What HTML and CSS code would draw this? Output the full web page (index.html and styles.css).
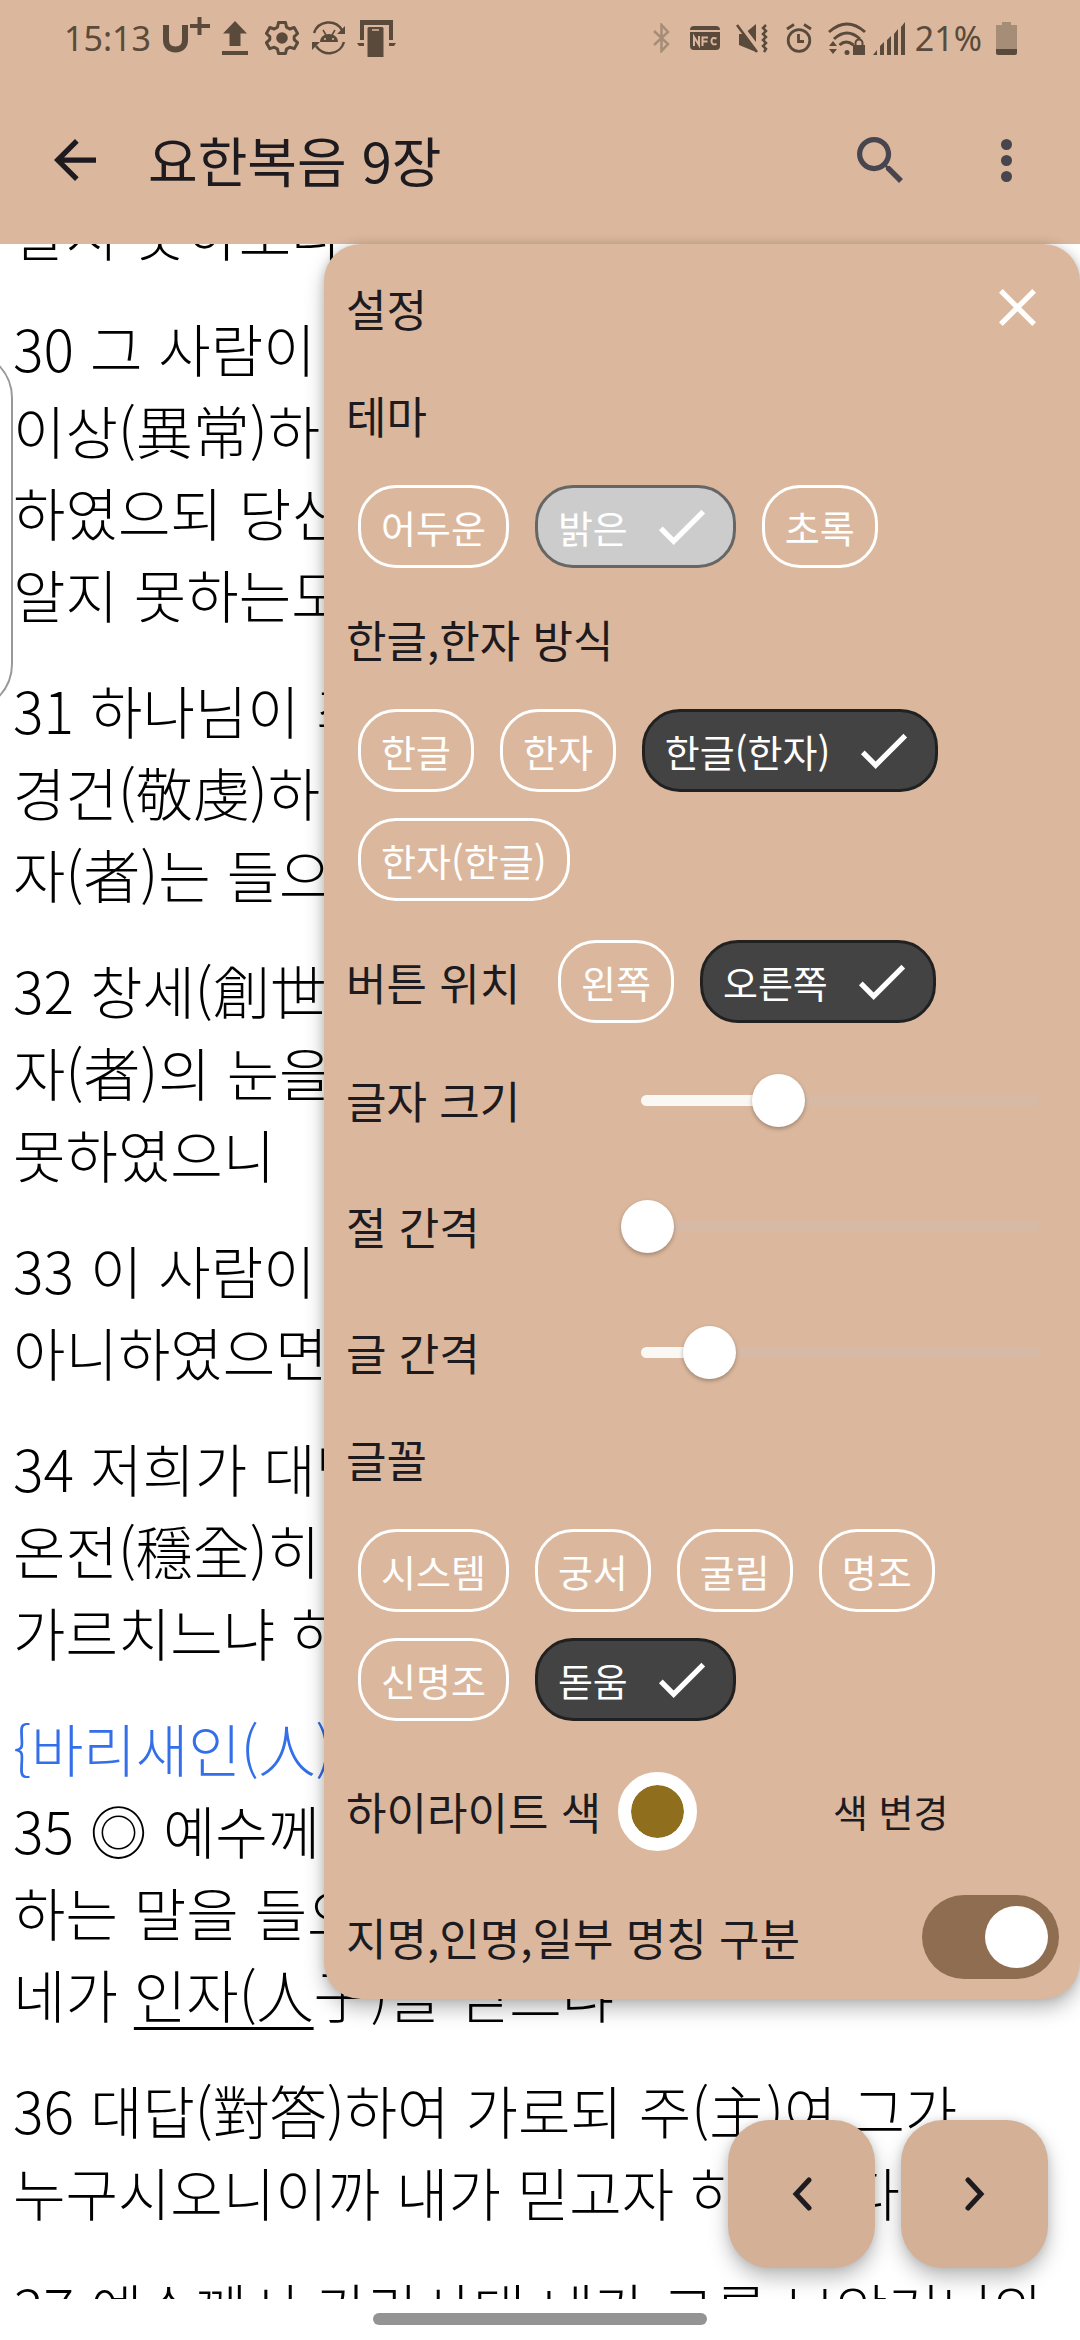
FILE: index.html
```html
<!DOCTYPE html>
<html lang="ko">
<head>
<meta charset="utf-8">
<meta name="viewport" content="width=device-width, initial-scale=1">
<title>요한복음 9장</title>
<link rel="stylesheet" href="styles.css">
</head>
<body>
<header class="top">
  <div class="status">
    <div class="status-left">
      <span class="clock">15:13</span>
      <svg class="ic-uplus" viewBox="0 0 48 38" width="48" height="38"><path d="M4 8v15c0 6 3.500 9.500 9.500 9.500S23 29 23 23V8" fill="none" stroke="currentColor" stroke-width="6"/><path d="M37.500 0v18M28 9h20" stroke="currentColor" stroke-width="4"/></svg>
      <svg class="ic-upload" viewBox="0 0 26 34" width="26" height="34"><path d="M13 0l12 12.500h-6.500V25h-11V12.500H1zM0 30h26v4H0z" fill="currentColor"/></svg>
      <svg class="ic-gear" viewBox="0 0 34 34" width="34" height="34"><circle cx="17" cy="17" r="5.800" fill="currentColor"/><path d="M13.500 1.500h7l1 4.600 3.200 1.900 4.500-1.500 3.400 6-3.400 3.100v3l3.400 3.100-3.400 6-4.500-1.500-3.200 1.900-1 4.400h-7l-1-4.400-3.200-1.900-4.500 1.500-3.400-6 3.400-3.100v-3l-3.400-3.100 3.400-6L9.300 8l3.200-1.900z" fill="none" stroke="currentColor" stroke-width="3" stroke-linejoin="round"/></svg>
      <svg class="ic-sync" viewBox="0 0 34 34" width="34" height="34"><path d="M2 12a15.500 15.500 0 0 1 28-3M32 21a15.500 15.500 0 0 1-28 4" fill="none" stroke="currentColor" stroke-width="2.500"/><path d="M33 5v8h-8zM0 29v-8h8z" fill="currentColor"/><path d="M8 21c0-5 4-8 9-8s9 3 9 8z" fill="currentColor"/><path d="M11 9l3 5M23 9l-3 5" stroke="currentColor" stroke-width="1.500"/><circle cx="13" cy="18" r="1" fill="#dbb89d"/><circle cx="21" cy="18" r="1" fill="#dbb89d"/></svg>
      <svg class="ic-dock" viewBox="0 0 39 37" width="39" height="37"><path d="M3 0h33v20h-4V5H7v15H3zM0 23h7v3H2zM32 23h7l-2 3h-5zM12 7h13q1.500 0 1.500 1.500V37h-16V8.500Q10.500 7 12 7z" fill="currentColor"/><path d="M15 10h7" stroke="#dbb89d" stroke-width="1.500"/></svg>
    </div>
    <div class="status-right">
      <svg class="ic-bt" viewBox="0 0 18 30" width="18" height="30"><path d="M2 8l14 13-6.500 7V2L16 9 2 22" fill="none" stroke="currentColor" stroke-width="2.500"/></svg>
      <svg class="ic-nfc" viewBox="0 0 30 24" width="30" height="24"><path d="M0 4Q0 0 4 0h22q4 0 4 4zM0 6h30v14q0 4-4 4H4q-4 0-4-4z" fill="currentColor"/><path d="M4 20v-9l5 8v-9M12.500 20v-8.500h5.500M12.500 15.500h5M26.500 12.500q-5-2-5 2.500t5 3" fill="none" stroke="#dbb89d" stroke-width="2"/></svg>
      <svg class="ic-mute" viewBox="0 0 32 29" width="32" height="29"><path d="M20 0v28L3 21V10h5z" fill="currentColor"/><path d="M3 0l20 26" stroke="#dbb89d" stroke-width="5"/><path d="M1 1l20 27" stroke="currentColor" stroke-width="2.500"/><path d="M30 1l-3 3 3 3-3 3 3 3-3 3 3 3-3 3 3 3-2 3" fill="none" stroke="currentColor" stroke-width="2.500"/></svg>
      <svg class="ic-alarm" viewBox="0 0 26 30" width="26" height="30"><circle cx="13" cy="17.500" r="10.800" fill="none" stroke="currentColor" stroke-width="2.800"/><path d="M12.500 11v7.500h5.500M1 6l7-4.500M25 6l-7-4.500" fill="none" stroke="currentColor" stroke-width="2.800"/></svg>
      <svg class="ic-wifi" viewBox="0 0 38 33" width="38" height="33"><path d="M1 10q18-16 36 0M6 17q13-12 26 0M11.500 23q6.500-6 14 0" fill="none" stroke="currentColor" stroke-width="3"/><circle cx="19" cy="30.500" r="2.500" fill="currentColor"/><path d="M1 24l4-5 4 5zM1 27l4 5 4-5zM25 23h12v10H25z" fill="currentColor"/><path d="M27.500 24v-3a3.500 3.500 0 0 1 7 0v3" fill="none" stroke="currentColor" stroke-width="2"/></svg>
      <svg class="ic-signal" viewBox="0 0 33 33" width="33" height="33"><path d="M0 33l4-5v5zM7 33v-9l4-4v13zM14 33V18l4-4v19zM21 33V12l4-5v26zM28 33V5l4-5v33z" fill="currentColor"/></svg>
      <span class="percent">21%</span>
      <svg class="ic-battery" viewBox="0 0 21 33" width="21" height="33"><path d="M6 0h9v3h6v24H0V3h6z" fill="#a68d77"/><path d="M0 27h21v4q0 2-2 2H2q-2 0-2-2z" fill="currentColor"/></svg>
    </div>
  </div>
  <div class="appbar">
    <button class="icon-btn" aria-label="뒤로"><svg viewBox="4 4 16 16" width="42" height="42"><path d="M20 11H7.830l5.590-5.590L12 4l-8 8 8 8 1.410-1.410L7.830 13H20z" fill="#1d1b20"/></svg></button>
    <h1>요한복음 9장</h1>
    <button class="icon-btn search" aria-label="검색"><svg viewBox="3 3 17.500 17.500" width="46" height="46"><path d="M15.500 14h-.79l-.28-.27C15.410 12.590 16 11.110 16 9.500 16 5.910 13.090 3 9.500 3S3 5.910 3 9.500 5.910 16 9.500 16c1.610 0 3.090-.59 4.230-1.570l.27.28v.79l5 4.990L20.490 19zm-6 0C7.010 14 5 11.990 5 9.500S7.010 5 9.500 5 14 7.010 14 9.500 11.990 14 9.500 14z" fill="#49454f"/></svg></button>
    <button class="icon-btn" aria-label="더보기"><svg viewBox="0 0 11 43" width="11" height="43"><g fill="#49454f"><circle cx="5.500" cy="5.500" r="5.500"/><circle cx="5.500" cy="21.500" r="5.500"/><circle cx="5.500" cy="37.500" r="5.500"/></g></svg></button>
  </div>
</header>

<main class="reader">
  <div class="verses">
    <p>알지 못하노라</p>
    <p>30 그 사람이<br>이상(異常)하<br>하였으되 당신<br>알지 못하는도</p>
    <p>31 하나님이 죄<br>경건(敬虔)하<br>자(者)는 들으</p>
    <p>32 창세(創世<br>자(者)의 눈을<br>못하였으니</p>
    <p>33 이 사람이<br>아니하였으면</p>
    <p>34 저희가 대답<br>온전(穩全)히<br>가르치느냐 하</p>
    <h2>{바리새인(人)</h2>
    <p>35 ◎ 예수께서<br>하는 말을 들으<br>네가 <u>인자(人</u>子)를 믿느냐</p>
    <p>36 대답(對答)하여 가로되 주(主)여 그가<br>누구시오니이까 내가 믿고자 하나이다</p>
    <p>37 예수께서 가라사대 네가 그를 보았거니와</p>
  </div>
</main>

<div class="edge-handle"></div>

<form class="settings">
  <div class="settings-head">
    <h2>설정</h2>
    <button type="button" class="icon-btn" aria-label="닫기"><svg viewBox="5 5 14 14" width="37" height="37"><path d="M19 6.410L17.590 5 12 10.590 6.410 5 5 6.410 10.590 12 5 17.590 6.410 19 12 13.410 17.590 19 19 17.590 13.410 12z" fill="#fff"/></svg></button>
  </div>

  <h3>테마</h3>
  <div class="chips muted">
    <label class="chip"><input type="radio" name="theme">어두운</label>
    <label class="chip"><input type="radio" name="theme" checked>밝은<svg viewBox="0 0 24 24"><path d="M9 16.170L4.830 12l-1.420 1.410L9 19 21 7l-1.410-1.410z"/></svg></label>
    <label class="chip"><input type="radio" name="theme">초록</label>
  </div>

  <h3>한글,한자 방식</h3>
  <div class="chips">
    <label class="chip"><input type="radio" name="script">한글</label>
    <label class="chip"><input type="radio" name="script">한자</label>
    <label class="chip"><input type="radio" name="script" checked>한글(한자)<svg viewBox="0 0 24 24"><path d="M9 16.170L4.830 12l-1.420 1.410L9 19 21 7l-1.410-1.410z"/></svg></label>
    <label class="chip"><input type="radio" name="script">한자(한글)</label>
  </div>

  <div class="row side-row">
    <span class="row-label">버튼 위치</span>
    <div class="chips">
      <label class="chip"><input type="radio" name="side">왼쪽</label>
      <label class="chip"><input type="radio" name="side" checked>오른쪽<svg viewBox="0 0 24 24"><path d="M9 16.170L4.830 12l-1.420 1.410L9 19 21 7l-1.410-1.410z"/></svg></label>
    </div>
  </div>

  <div class="row slider-row">
    <label class="row-label" for="size">글자 크기</label>
    <div class="slider" style="--value: 34%"><input id="size" type="range" min="0" max="100" value="34"></div>
  </div>
  <div class="row slider-row">
    <label class="row-label" for="verse-gap">절 간격</label>
    <div class="slider" style="--value: 0%"><input id="verse-gap" type="range" min="0" max="100" value="0"></div>
  </div>
  <div class="row slider-row">
    <label class="row-label" for="line-gap">글 간격</label>
    <div class="slider" style="--value: 16%"><input id="line-gap" type="range" min="0" max="100" value="16"></div>
  </div>

  <h3>글꼴</h3>
  <div class="chips">
    <label class="chip"><input type="radio" name="font">시스템</label>
    <label class="chip"><input type="radio" name="font">궁서</label>
    <label class="chip"><input type="radio" name="font">굴림</label>
    <label class="chip"><input type="radio" name="font">명조</label>
    <label class="chip"><input type="radio" name="font">신명조</label>
    <label class="chip"><input type="radio" name="font" checked>돋움<svg viewBox="0 0 24 24"><path d="M9 16.170L4.830 12l-1.420 1.410L9 19 21 7l-1.410-1.410z"/></svg></label>
  </div>

  <div class="row color-row">
    <label class="row-label" for="highlight">하이라이트 색</label>
    <input id="highlight" class="swatch" type="color" value="#8f6e1d">
    <button type="button" class="text-btn">색 변경</button>
  </div>

  <div class="row toggle-row">
    <label class="row-label" for="names">지명,인명,일부 명칭 구분</label>
    <input id="names" class="toggle" type="checkbox" checked>
  </div>
</form>

<nav class="fabs">
  <button class="fab" aria-label="이전 장"><svg viewBox="0 0 20 34" width="20" height="34"><path d="M17 3L4 17l13 14" fill="none" stroke="#1d1b20" stroke-width="5" stroke-linecap="round"/></svg></button>
  <button class="fab" aria-label="다음 장"><svg viewBox="0 0 20 34" width="20" height="34"><path d="M3 3l13 14L3 31" fill="none" stroke="#1d1b20" stroke-width="5" stroke-linecap="round"/></svg></button>
</nav>

<footer class="gesture"><div class="pill"></div></footer>
</body>
</html>
```
FILE: styles.css
```css
* { box-sizing: border-box; }

body {
  margin: 0;
  height: 100vh;
  display: flex;
  flex-direction: column;
  position: relative;
  overflow: hidden;
  background: #fff;
  color: #1d1b20;
  font-family: "Noto Sans CJK KR", sans-serif;
}

h1, h2, h3 { margin: 0; font-weight: 400; }
p { margin: 0; }

button {
  padding: 0;
  border: 0;
  background: none;
  color: inherit;
  font: inherit;
}

svg { display: block; flex: none; }

/* Status bar and title bar */
.top { flex: none; background: #dbb89d; }

.status {
  height: 76px;
  padding: 0 63px 0 64px;
  display: flex;
  justify-content: space-between;
  align-items: center;
  color: #5a4a3b;
  font-family: "Noto Sans", sans-serif;
  font-size: 34px;
  line-height: 48px;
}
.status-left, .status-right { display: flex; align-items: center; }
.ic-uplus { margin-left: 11px; margin-bottom: 4px; }
.ic-upload { margin-left: 12px; }
.ic-gear { margin-left: 17px; }
.ic-sync { margin-left: 13px; }
.ic-dock { margin-left: 11px; }
.ic-bt { color: #a68d77; }
.ic-nfc { margin-left: 20px; }
.ic-mute { margin-left: 16px; }
.ic-alarm { margin-left: 18px; }
.ic-wifi { margin-left: 16px; }
.ic-signal { margin-left: 7px; }
.percent { margin-left: 9px; }
.ic-battery { margin-left: 14px; }

.appbar {
  height: 168px;
  padding: 0 68px 0 54px;
  display: flex;
  align-items: center;
  gap: 52px;
}
.appbar h1 { font-size: 54px; line-height: 78px; flex: 1; }
.appbar .search { margin-right: 46px; }

/* Scripture text */
.reader { flex: 1; min-height: 0; overflow: hidden; }
.verses {
  margin-top: -54px;
  padding: 0 13px;
  color: #000;
  font-size: 57px;
  font-weight: 300;
  line-height: 82px;
  white-space: nowrap;
}
.verses p { margin-bottom: 34px; }
.verses h2 { color: #326fe8; font-size: 57px; font-weight: 300; }
.verses u { text-decoration-thickness: 3px; text-underline-offset: 9px; }

.edge-handle {
  position: absolute;
  left: -48px;
  top: 350px;
  width: 61px;
  height: 362px;
  background: #fff;
  border: 2px solid #999;
  border-radius: 0 48px 48px 0;
}

/* Settings sheet */
.settings {
  position: absolute;
  top: 244px;
  right: 0;
  width: 70%;
  padding: 0 21px 0 22px;
  display: flex;
  flex-direction: column;
  background: #dbb89d;
  border-radius: 37px;
  box-shadow: 0 10px 20px rgba(0, 0, 0, .26), 0 0 10px rgba(0, 0, 0, .14);
  font-size: 44px;
  line-height: 64px;
}
.settings-head {
  height: 127px;
  padding-right: 23px;
  display: flex;
  align-items: center;
  justify-content: space-between;
}
.settings h2 { font-size: 44px; }
.settings h3 { margin: 12px 0 38px; font-size: 44px; }

.chips {
  display: flex;
  flex-wrap: wrap;
  gap: 26px;
  margin: 0 0 27px 12px;
}
.chip {
  position: relative;
  height: 83px;
  padding: 0 20px;
  display: flex;
  align-items: center;
  gap: 22px;
  border: 3px solid #fff;
  border-radius: 38px;
  color: #fff;
  font-size: 38px;
  line-height: 56px;
}
.chip input {
  position: absolute;
  inset: 0;
  margin: 0;
  opacity: 0;
}
.chip svg { width: 63px; height: 63px; fill: #fff; }
.chip:has(input:checked) { background: #434343; border-color: #212121; }
.muted .chip:has(input:checked) { background: #ccc; border-color: #666; }

.row { display: grid; align-items: center; height: 126px; }
.row-label { white-space: nowrap; }

.side-row { grid-template-columns: 200px 1fr; height: 83px; margin: 12px 0 14px; }
.side-row .chips { margin-bottom: 0; }

.slider-row { grid-template-columns: 275px 1fr; }
.slider { position: relative; height: 53px; }
.slider::before,
.slider::after {
  content: "";
  position: absolute;
  top: 21px;
  left: 20px;
  right: 20px;
  height: 11px;
  border-radius: 6px;
  background: #d6baa6;
}
.slider::after {
  right: auto;
  width: calc(var(--value) * 0.9);
  background: #faf8f5;
}
.slider input {
  position: relative;
  z-index: 1;
  display: block;
  width: 100%;
  height: 53px;
  margin: 0;
  appearance: none;
  background: none;
}
.slider input::-webkit-slider-thumb {
  appearance: none;
  width: 53px;
  height: 53px;
  border-radius: 50%;
  background: #fff;
  box-shadow: 0 2px 4px rgba(0, 0, 0, .28);
}

.color-row { grid-template-columns: 272px 79px 1fr; justify-items: start; }
.swatch {
  width: 79px;
  height: 79px;
  padding: 0;
  border: 13px solid #fff;
  border-radius: 50%;
  appearance: none;
  background: #fff;
}
.swatch::-webkit-color-swatch-wrapper { padding: 0; }
.swatch::-webkit-color-swatch { border: 0; border-radius: 50%; }
.text-btn { margin-left: 136px; font-size: 38px; line-height: 56px; }

.toggle-row { grid-template-columns: 1fr 137px; height: 125px; }
.toggle {
  width: 137px;
  height: 84px;
  margin: 0;
  padding: 11px;
  display: flex;
  justify-content: flex-end;
  appearance: none;
  border-radius: 42px;
  background: #8f6d50;
}
.toggle::before {
  content: "";
  width: 63px;
  height: 62px;
  border-radius: 50%;
  background: #fff;
}

/* Chapter buttons */
.fabs {
  position: absolute;
  right: 32px;
  bottom: 72px;
  display: flex;
  gap: 26px;
}
.fab {
  width: 147px;
  height: 148px;
  display: flex;
  align-items: center;
  justify-content: center;
  border-radius: 42px;
  background: #d3b096;
  box-shadow: 0 10px 20px rgba(0, 0, 0, .26), 0 0 8px rgba(0, 0, 0, .1);
}

.gesture {
  flex: none;
  height: 41px;
  padding-top: 14px;
  background: #fff;
}
.pill {
  width: 31%;
  height: 12px;
  margin: 0 auto;
  border-radius: 6px;
  background: #949494;
}
```
